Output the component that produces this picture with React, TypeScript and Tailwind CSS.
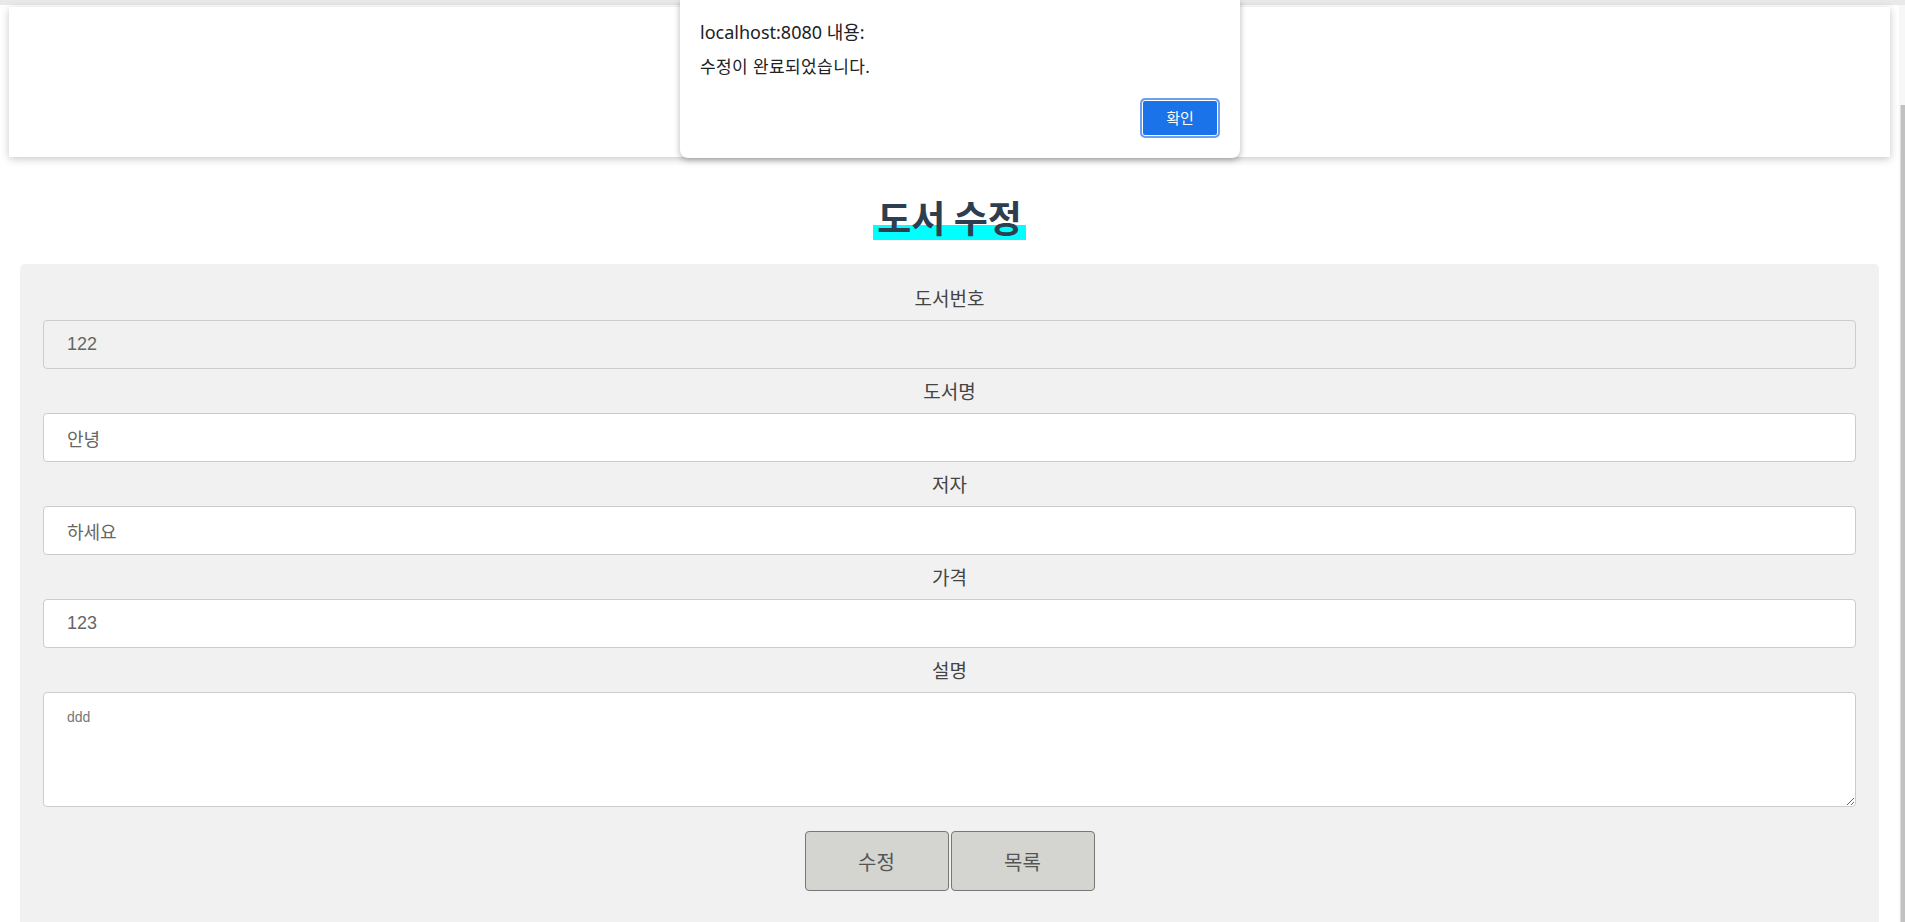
import React from "react";

const FONT = "font-['Liberation_Sans','Noto_Sans_CJK_KR',sans-serif]";

const fields = [
  { label: "도서명", value: "안녕" },
  { label: "저자", value: "하세요" },
  { label: "가격", value: "123" },
];

function AlertDialog() {
  return (
    <div className="absolute top-0 left-[680px] w-[560px] h-[158px] bg-white rounded-b-lg shadow-[0_2px_6px_rgba(0,0,0,0.3)] px-[20px] pt-[20px] flex flex-col font-['Noto_Sans','Noto_Sans_CJK_KR',sans-serif]">
      <div className="text-[18px] leading-[24px] text-[#202124]">localhost:8080 내용:</div>
      <div className="mt-[12px] text-[17px] leading-[22px] tracking-[0.4px] text-[#202124]">수정이 완료되었습니다.</div>
      <div className="mt-[20px] flex justify-end">
        <button className="w-[80px] h-[40px] rounded-[5px] bg-[#1a73e8] border-2 border-[#6d9ef0] shadow-[inset_0_0_0_1px_#ffffff] text-white text-[15px]">
          확인
        </button>
      </div>
    </div>
  );
}

export default function App() {
  return (
    <div className={`relative w-[1905px] h-[922px] overflow-hidden bg-white ${FONT}`}>
      <div className="h-[5px] bg-[#e9e9e9]" />
      <div className="flex h-[917px]">
        <main className="flex-1">
          <header className="mx-[9px] mt-[2px] h-[150px] bg-white shadow-[0_2px_8px_rgba(0,0,0,0.22)]" />

          <div className="mt-[37px] mb-[24px] flex justify-center">
            <h2 className="relative inline-block px-[4px] text-[37px] leading-[46px] font-bold text-[#2c3e50] font-['Noto_Sans_CJK_KR',sans-serif]">
              <span className="absolute left-0 right-0 bottom-0 h-[15px] bg-[#00ffff]" />
              <span className="relative">도서 수정</span>
            </h2>
          </div>

          <form className="mx-[20px] rounded-t-[5px] bg-[#f1f1f1] px-[23px] pt-[12px] pb-[40px]">
            <label className="h-[44px] pt-[5px] flex items-center justify-center text-[19px] text-[#444]">도서번호</label>
            <input
              disabled
              value="122"
              readOnly
              className="w-full h-[49px] rounded-[4px] border border-[#cccccc] bg-[#f1f1f1] pl-[23px] text-[18px] text-[#666]"
            />
            {fields.map(f => (
              <div key={f.label}>
                <label className="h-[44px] pt-[5px] flex items-center justify-center text-[19px] text-[#444]">{f.label}</label>
                <input
                  value={f.value}
                  readOnly
                  className="w-full h-[49px] rounded-[4px] border border-[#cccccc] bg-white pl-[23px] text-[18px] text-[#666] outline-none"
                />
              </div>
            ))}
            <label className="h-[44px] pt-[5px] flex items-center justify-center text-[19px] text-[#444]">설명</label>
            <textarea
              value="ddd"
              readOnly
              className="block w-full h-[115px] rounded-[4px] border border-[#cccccc] bg-white pl-[23px] pt-[14px] text-[14px] text-[#777] outline-none"
            />
            <div className="mt-[24px] flex justify-center gap-[2px]">
              <button type="button" className="w-[144px] h-[60px] pt-[3px] rounded-[4px] border border-[#777] bg-[#d4d5d1] text-[20px] text-[#555]">
                수정
              </button>
              <button type="button" className="w-[144px] h-[60px] pt-[3px] rounded-[4px] border border-[#777] bg-[#d4d5d1] text-[20px] text-[#555]">
                목록
              </button>
            </div>
          </form>
        </main>

        <div className="w-[6px] flex flex-col bg-[#f7f7f7]">
          <div className="h-[100px]" />
          <div className="flex-1 ml-[1px] bg-[#c1c1c1] border-l border-[#dedede]" />
        </div>
      </div>

      <AlertDialog />
    </div>
  );
}
